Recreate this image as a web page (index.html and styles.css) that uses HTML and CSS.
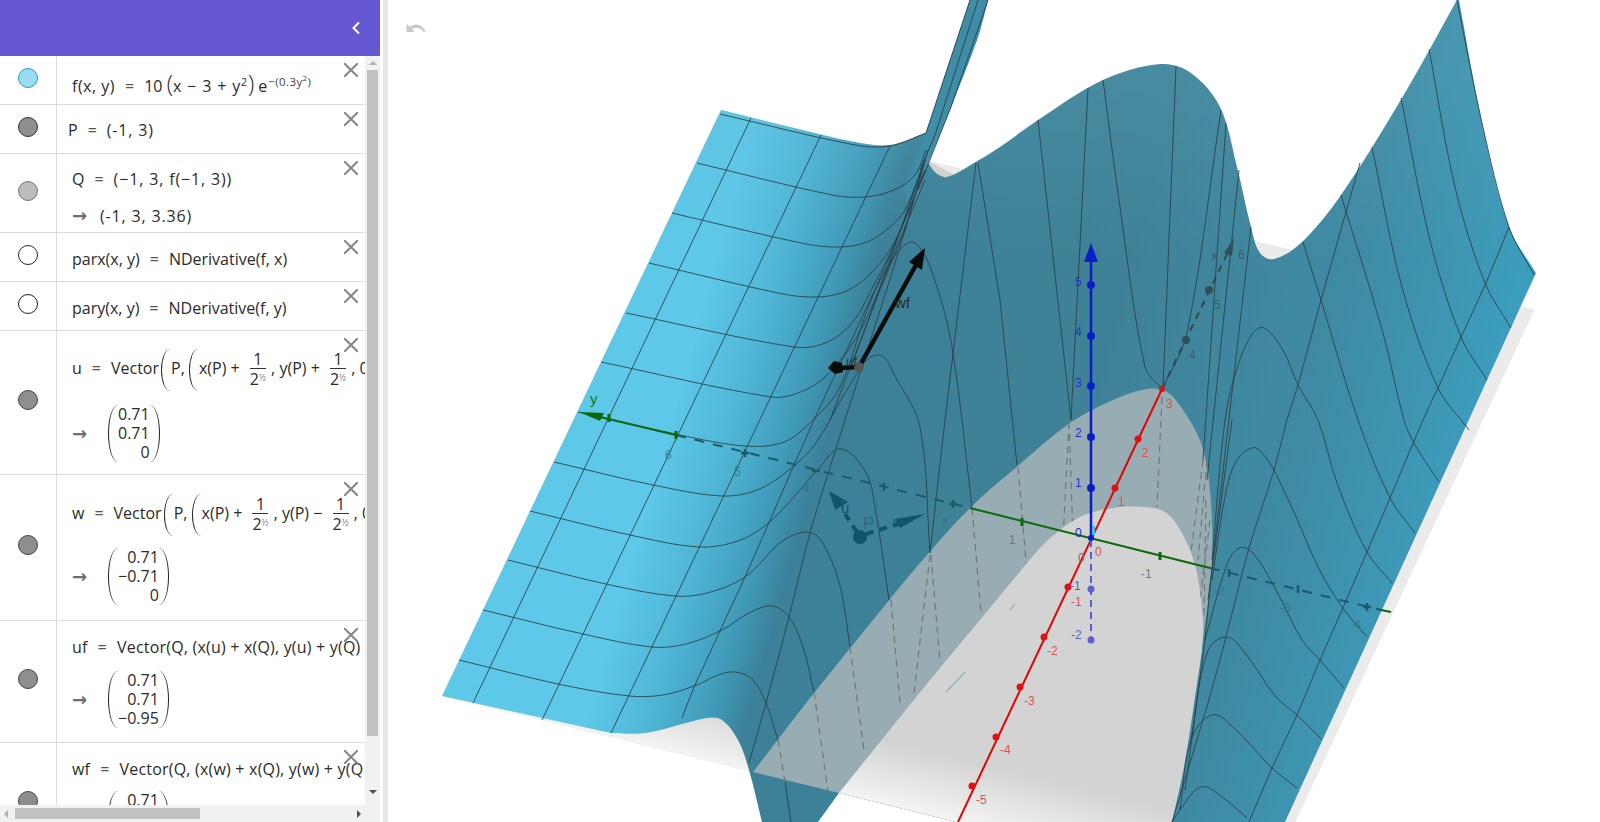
FILE: index.html
```html
<!DOCTYPE html>
<html lang="en">
<head>
<meta charset="utf-8">
<title>Graphing 3D</title>
<link rel="stylesheet" href="styles.css">
</head>
<body>
<div class="app">
  <aside class="panel">
    <header class="panel-head">
      <svg class="chevron" viewBox="0 0 10 14"><path d="M8 1.5 2.5 7 8 12.5"/></svg>
    </header>
    <div class="panel-body">
      <div class="list">
        <section class="row h2">
          <div class="marble-col"><span class="marble m-blue"></span></div>
          <div class="cell pt18">
            <div class="line"><span class="wide-s">f(x, y)</span><span class="op">=</span>10 <span class="lg">(</span><span class="wide">x − 3 + y<sup>2</sup></span><span class="lg">)</span> e<sup class="exp">−(0.3y<sup>2</sup>)</sup></div>
          </div>
          <svg class="close" viewBox="0 0 14 14"><path d="M0 0 14 14M14 0 0 14"/></svg>
        </section>
        <section class="row h2">
          <div class="marble-col"><span class="marble m-point"></span></div>
          <div class="cell pt13 nudge"><div class="line">P<span class="op">=</span><span class="wide">(-1, 3)</span></div></div>
          <svg class="close" viewBox="0 0 14 14"><path d="M0 0 14 14M14 0 0 14"/></svg>
        </section>
        <section class="row h3">
          <div class="marble-col"><span class="marble m-light"></span></div>
          <div class="cell pt13">
            <div class="line">Q<span class="op">=</span><span class="wide">(−1, 3, f(−1, 3))</span></div>
            <div class="result gap13"><span class="arrow narrow">→</span><span class="wide">(-1, 3, 3.36)</span></div>
          </div>
          <svg class="close" viewBox="0 0 14 14"><path d="M0 0 14 14M14 0 0 14"/></svg>
        </section>
        <section class="row h2">
          <div class="marble-col"><span class="marble m-open"></span></div>
          <div class="cell pt14"><div class="line">parx(x, y)<span class="op">=</span>NDerivative(f, x)</div></div>
          <svg class="close" viewBox="0 0 14 14"><path d="M0 0 14 14M14 0 0 14"/></svg>
        </section>
        <section class="row h2">
          <div class="marble-col"><span class="marble m-open"></span></div>
          <div class="cell pt14"><div class="line">pary(x, y)<span class="op">=</span>NDerivative(f, y)</div></div>
          <svg class="close" viewBox="0 0 14 14"><path d="M0 0 14 14M14 0 0 14"/></svg>
        </section>
        <section class="row h6">
          <div class="marble-col"><span class="marble m-grey"></span></div>
          <div class="cell pt15">
            <div class="line tall">u<span class="op">=</span>Vector<span class="bl"></span>P, <span class="bl b2"></span>x(P) + <span class="frac"><span class="num">1</span><span class="den">2<i>½</i></span></span> , y(P) + <span class="frac"><span class="num">1</span><span class="den">2<i>½</i></span></span> , 0</div>
            <div class="result gap15"><span class="arrow">→</span><div class="matrix"><span class="ml"></span><div class="cells"><span>0.71</span><span>0.71</span><span>0</span></div><span class="mr"></span></div></div>
          </div>
          <svg class="close" viewBox="0 0 14 14"><path d="M0 0 14 14M14 0 0 14"/></svg>
        </section>
        <section class="row h7">
          <div class="marble-col"><span class="marble m-grey"></span></div>
          <div class="cell pt16">
            <div class="line tall">w<span class="op">=</span>Vector<span class="bl"></span>P, <span class="bl b2"></span>x(P) + <span class="frac"><span class="num">1</span><span class="den">2<i>½</i></span></span> , y(P) − <span class="frac"><span class="num">1</span><span class="den">2<i>½</i></span></span> , 0</div>
            <div class="result gap13"><span class="arrow">→</span><div class="matrix"><span class="ml"></span><div class="cells"><span>0.71</span><span>−0.71</span><span>0</span></div><span class="mr"></span></div></div>
          </div>
          <svg class="close" viewBox="0 0 14 14"><path d="M0 0 14 14M14 0 0 14"/></svg>
        </section>
        <section class="row h8">
          <div class="marble-col"><span class="marble m-grey"></span></div>
          <div class="cell pt14">
            <div class="line long">uf<span class="op">=</span>Vector(Q, (x(u) + x(Q), y(u) + y(Q)</div>
            <div class="result gap12"><span class="arrow">→</span><div class="matrix"><span class="ml"></span><div class="cells"><span>0.71</span><span>0.71</span><span>−0.95</span></div><span class="mr"></span></div></div>
          </div>
          <svg class="close" viewBox="0 0 14 14"><path d="M0 0 14 14M14 0 0 14"/></svg>
        </section>
        <section class="row h8">
          <div class="marble-col"><span class="marble m-grey"></span></div>
          <div class="cell pt14">
            <div class="line long">wf<span class="op">=</span>Vector(Q, (x(w) + x(Q), y(w) + y(Q</div>
            <div class="result gap10"><span class="arrow">→</span><div class="matrix"><span class="ml"></span><div class="cells"><span>0.71</span><span>−0.71</span><span>2.5</span></div><span class="mr"></span></div></div>
          </div>
          <svg class="close" viewBox="0 0 14 14"><path d="M0 0 14 14M14 0 0 14"/></svg>
        </section>
      </div>
      <div class="vbar">
        <span class="tri tri-up"></span>
        <span class="vthumb"></span>
        <span class="tri tri-down"></span>
      </div>
    </div>
    <div class="hbar">
      <span class="tri tri-left"></span>
      <span class="hthumb"></span>
      <span class="tri tri-right"></span>
    </div>
  </aside>
  <div class="splitter"></div>
  <main class="stage">
    <svg class="undo" viewBox="0 0 22 11"><path d="M0 1v9h9L6 7c4-3 9-2 13 3l2-1C17 2 10-1 4 4z"/></svg>
    <svg class="scene" viewBox="388 0 1212 822" width="1212" height="822">
      <defs>
        <linearGradient id="planeGrad" gradientUnits="userSpaceOnUse" x1="700" y1="757" x2="714" y2="699">
          <stop offset="0" stop-color="#f2f2f2"/><stop offset="1" stop-color="#d3d3d3"/>
        </linearGradient>
        <linearGradient id="surfGrad" gradientUnits="userSpaceOnUse" x1="673" y1="189" x2="1500" y2="421">
          <stop offset=".07" stop-color="#5dc8e8"/>
          <stop offset=".14" stop-color="#50b6d6"/>
          <stop offset=".209" stop-color="#3f9ab8"/>
          <stop offset=".25" stop-color="#3c8199"/>
          <stop offset=".51" stop-color="#3f8197"/>
          <stop offset=".79" stop-color="#3f8ba4"/>
          <stop offset=".977" stop-color="#3c9dbc"/>
        </linearGradient>
        <linearGradient id="sheenGrad" gradientUnits="userSpaceOnUse" x1="0" y1="70" x2="0" y2="260">
          <stop offset="0" stop-color="#6fb4c8" stop-opacity=".2"/><stop offset="1" stop-color="#6fb4c8" stop-opacity="0"/>
        </linearGradient>
        <path id="surfShape" data-pts="721,110 790,127 855,142 890,145 926,133|926,133 970,0|988,0 978,37 951,107 928,163|928,163 936,173 947,177 974,163 1000,147 1038,120 1103,80 1161,64 1191,73 1220,107 1237,167 1251,227 1260,253 1274,259 1302,242 1341,195 1402,98 1457,0|1459,0 1482,123 1509,227 1536,273|1285,822|956,822|839,793|818,822|762,822 749,770 738,740 722,720 707,718 646,733 611,733|442,696" data-closed="1"></path>
      </defs>

      <path class="plane" d="M442 696 721 110 1534 310 1295 822H956z"/>
      <path class="plane-edge" d="M928 161 1534 310 1295 822H1200V300z"/>

      <use class="surface" href="#surfShape"/>
      <use class="sheen" href="#surfShape"/>
      <path class="spike" d="M926 133 970 0H988L978 37 951 107 928 163 912 215 903 190z"/>

      <path class="band" data-pts="753,772 810,698 873,620 920,563 970,508 1013,470 1070,423 1113,400 1147,389 1167,392 1183,410 1200,440 1208,473 1212,520 1212,567 1207,610 1203,637|1172,822|956,822|839,793" data-closed="1"></path>

      <g class="ghost">
        <path d="M972 508 981 613M1018 467 1027 573M930 555 914 693M931 555 940 662M891 600 900 703M850 647 864 750M814 692 828 792M778 740 785 782"/>
        <path d="M1069 422 1063 540M1069 422 1073 537M1162 397 1157 507M1207 460 1198 560M1203 460 1190 560M1210 520 1200 600M1206 500 1204 620"/>
      </g>

      <path class="inner" data-pts="839,793 880,742 930,680 980,620 1013,580 1047,541 1080,517 1113,508 1142,507 1165,512 1182,533 1195,565 1201,600 1203,637 1195,697 1184,767 1172,822|956,822" data-closed="1"></path>
      <path class="streak" d="M946 692 965 672M1010 610 1015 604"/>

      <g class="mesh">
        <path data-pts="720,114 855,145 890,146 926,133"></path>
        <path data-pts="697,163 832,195 865,197 894,190 915,175 926,150"></path>
        <path data-pts="672,213 806,244 840,247 867,242 890,227 905,210 925,160"></path>
        <path data-pts="649,263 783,294 817,297 844,292 867,277 894,243 925,170"></path>
        <path data-pts="626,313 794,347 825,343 852,323 875,283 894,245 925,170"></path>
        <path data-pts="601,362 771,397 798,393 825,377 859,333 894,253 925,180"></path>
        <path data-pts="578,412 680,435 745,446 784,442 813,420 840,387 871,300 897,253 915,243 937,287 953,353 972,507"></path>
        <path data-pts="554,462 653,485 722,496 757,490 789,470 816,443 850,385 877,355 897,380 920,427 930,553"></path>
        <path data-pts="530,511 630,535 699,547 738,541 766,525 793,498 820,467 841,449 866,473 875,507 889,600"></path>
        <path data-pts="508,560 606,584 674,596 707,593 745,577 784,540 812,533 828,553 841,590 850,647"></path>
        <path data-pts="483,610 583,634 652,647 686,644 722,630 749,613 772,606 789,617 803,647 814,692"></path>
        <path data-pts="459,660 558,684 629,696 663,695 697,685 718,675 736,672 753,680 766,703 778,740"></path>
        <path d="M751 118 473 703M821 135 542 720M890 146 611 733"/>
        <path data-pts="920,173 894,247 814,420 745,577 695,685 682,718"></path>
        <path data-pts="925,160 900,247 845,420 810,533 789,617 766,703 749,763"></path>
        <path d="M928 150 905 230 880 290 830 420M925 160 890 260 850 370M970 0 926 133M978 0 935 135 920 170M988 0 951 107 918 190M785 782 791 822"/>
        <path d="M978 163 1000 300 1017 465M976 163 945 420 930 553M1038 120 1071 420M1088 88 1071 420"/>
        <path data-pts="1103,80 1119,200 1145,367 1161,388"></path>
        <path d="M1176 66 1163 388"/>
        <path data-pts="1221,110 1187,333 1163,388"></path>
        <path d="M1226 123 1203 460M1239 170 1207 480M1251 227 1212 567"/>
        <path data-pts="1457,0 1482,123 1509,227 1534,275"></path>
        <path data-pts="1429,49 1455,187 1485,283 1511,328"></path>
        <path data-pts="1401,98 1430,240 1461,337 1487,380"></path>
        <path data-pts="1372,147 1402,287 1438,388 1469,430"></path>
        <path data-pts="1341,195 1383,333 1404,420 1415,445 1439,482"></path>
        <path data-pts="1303,242 1321,300 1358,420 1390,498 1415,533"></path>
        <path data-pts="1212,560 1225,420 1238,365 1253,333 1264,328 1283,350 1298,385 1318,420 1337,483 1367,552 1392,583"></path>
        <path data-pts="1212,580 1227,487 1240,456 1258,449 1287,497 1318,567 1342,607 1367,637"></path>
        <path data-pts="1205,640 1226,567 1239,548 1253,553 1276,590 1302,640 1320,660 1344,688"></path>
        <path data-pts="1191,740 1207,653 1226,637 1245,653 1276,697 1297,715 1321,739"></path>
        <path data-pts="1180,810 1191,740 1212,715 1233,727 1272,768 1297,788"></path>
        <path data-pts="1172,822 1180,810 1201,787 1222,797 1247,818"></path>
        <path data-pts="1509,227 1486,283 1461,337 1438,388 1423,420 1390,498 1367,552 1342,610 1320,660 1297,715 1272,768 1249,822"></path>
        <path data-pts="1360,163 1321,300 1298,385 1287,420 1274,470 1249,548 1226,637 1208,703 1172,822"></path>
        <path d="M1212 567 1205 640 1185 790M1208 600 1232 420"/>
      </g>

      <line class="axis-y-dash" x1="676" y1="435" x2="970" y2="508"/>
      <line class="axis-y-dash" x1="1210" y1="568" x2="1381" y2="610"/>
      <line class="axis-y" x1="600" y1="417" x2="676" y2="435"/>
      <line class="axis-y" x1="970" y1="508" x2="1210" y2="568"/>
      <line class="axis-y" x1="1381" y1="610" x2="1391" y2="612"/>
      <polygon class="head-y" points="579,412 604,413 600,421"/>
      <path class="tick-y" d="M609 414v8M676 431v8M1022 518v8M1160 552v8"/>
      <path class="tick-y-dim" d="M741 453h8M745 449v8M812 471h8M884 483v8M949 504h8M953 500v8M1229 569v8M1298 585v8M1363 607h8M1367 603v8"/>

      <line class="axis-x-dash" x1="1162" y1="389" x2="1228" y2="252"/>
      <polygon class="dim-dark" points="1234,238 1224,253 1232,256"/>
      <circle class="dim-dark" cx="1186" cy="340" r="4"/><circle class="dim-dark" cx="1209" cy="290" r="4"/>
      <line class="axis-x" x1="1162" y1="389" x2="958" y2="822"/>
      <g class="tick-x">
        <circle cx="1162" cy="389" r="3"/><circle cx="1138" cy="439" r="3.5"/><circle cx="1115" cy="488" r="3.5"/>
        <circle cx="1068" cy="587" r="3.5"/><circle cx="1044" cy="637" r="3.5"/><circle cx="1020" cy="687" r="3.5"/>
        <circle cx="996" cy="737" r="3.5"/><circle cx="972" cy="786" r="3.5"/>
      </g>

      <line class="axis-z-dash" x1="1091" y1="540" x2="1091" y2="648"/>
      <circle class="tick-z-dim" cx="1091" cy="589" r="3.5"/><circle class="tick-z-dim" cx="1091" cy="640" r="3.5"/>
      <line class="axis-z" x1="1091" y1="260" x2="1091" y2="538"/>
      <polygon class="head-z" points="1091,243 1098,262 1084,262"/>
      <g class="head-z">
        <circle cx="1091" cy="285" r="4"/><circle cx="1091" cy="336" r="4"/><circle cx="1091" cy="386" r="4"/>
        <circle cx="1091" cy="437" r="4"/><circle cx="1091" cy="488" r="4"/><circle cx="1091" cy="538" r="3"/>
      </g>
      <rect class="origin-mark" x="1092" y="526" width="3" height="9"/>

      <line class="vec-dash" x1="857" y1="532" x2="845" y2="514"/>
      <line class="vec-dash" x1="866" y1="534" x2="898" y2="524"/>
      <polygon class="vec-p" points="829,491 835,510 848,502"/>
      <polygon class="vec-p" points="925,514 895,519 900,528"/>
      <circle class="vec-p" cx="860" cy="537" r="7"/>
      <text class="lbl-vec" x="841" y="513">u</text>
      <text class="lbl-p" x="863" y="529">P</text>
      <text class="lbl-vec" x="893" y="527">w</text>

      <line class="vec-black" x1="859" y1="367" x2="916" y2="265"/>
      <polygon class="vec-tip" points="925,248 922,270 909,262"/>
      <line class="vec-black" x1="859" y1="367" x2="838" y2="368"/>
      <polygon class="vec-tip" points="828,368 834,361 842,363 843,372 835,374"/>
      <circle class="point-q" cx="859" cy="367" r="5"/>
      <text class="lbl-wf" x="895" y="308">wf</text>
      <text class="lbl-uf" x="846" y="366">uf</text>

      <text class="lbl-g" x="590" y="404">y</text>
      <g class="lbl-teal">
        <text x="665" y="459">6</text><text x="734" y="476">5</text><text x="803" y="492">4</text><text x="872" y="510">3</text><text x="941" y="527">2</text>
        <text x="1214" y="595">-2</text><text x="1280" y="612">-3</text><text x="1350" y="629">-4</text>
      </g>
      <g class="lbl-grey">
        <text x="1009" y="544">1</text><text x="1141" y="578">-1</text><text x="1078" y="562">0</text>
      </g>
      <g class="lbl-red">
        <text x="1166" y="408">3</text><text x="1142" y="457">2</text><text x="1118" y="506">1</text><text x="1095" y="556">0</text>
        <text x="1071" y="606">-1</text><text x="1047" y="655">-2</text><text x="1024" y="705">-3</text><text x="1000" y="754">-4</text><text x="976" y="804">-5</text>
      </g>
      <g class="lbl-blue">
        <text x="1075" y="286">5</text><text x="1075" y="336">4</text><text x="1075" y="387">3</text><text x="1075" y="437">2</text><text x="1075" y="487">1</text><text x="1075" y="537">0</text>
      </g>
      <g class="lbl-violet">
        <text x="1070" y="590">-1</text><text x="1071" y="639">-2</text>
      </g>
      <g class="lbl-dim">
        <text class="lbl-x" x="1211" y="261">x</text><text x="1238" y="259">6</text><text x="1214" y="309">5</text><text x="1189" y="359">4</text>
      </g>
    </svg>
  </main>
</div>
<script src="scene.js"></script>
</body>
</html>
```

FILE: styles.css
```css
* { box-sizing: border-box; }
html, body { margin: 0; height: 100%; background: #fff; overflow: hidden; }
.app { display: flex; width: 1600px; height: 822px; }

.panel { width: 380px; height: 822px; display: flex; flex-direction: column; flex: none; font-family: "Open Sans", "Noto Sans", sans-serif; font-size: 16px; color: #2b2b2b; }
.panel-head { height: 56px; background: #6557d2; display: flex; align-items: center; justify-content: flex-end; padding-right: 19px; flex: none; }
.chevron { width: 10px; height: 14px; fill: none; stroke: #fff; stroke-width: 2; }
.panel-body { flex: 1; display: flex; min-height: 0; }
.list { flex: 1; overflow: hidden; min-width: 0; }

.row { position: relative; display: flex; border-bottom: 1px solid #dcdcdc; overflow: hidden; }
.h2 { height: 49px; }
.h3 { height: 79px; }
.h6 { height: 144px; }
.h7 { height: 146px; }
.h8 { height: 122px; }

.marble-col { width: 57px; flex: none; border-right: 1px solid #dcdcdc; display: flex; align-items: center; justify-content: center; padding-bottom: 5px; }
.marble { width: 20px; height: 20px; border-radius: 50%; border: 1px solid #444; display: block; }
.m-blue { background: #9adcf0; border-color: #2b9ac0; }
.m-point { background: #938e8e; border-color: #333; }
.m-light { background: #bcbcbc; border-color: #777; }
.m-open { background: #fff; border-color: #222; }
.m-grey { background: #8e8e8e; border-color: #444; }

.cell { padding-left: 15px; flex: none; }
.nudge { padding-left: 11px; }
.pt13 { padding-top: 13px; }
.pt14 { padding-top: 14px; }
.pt15 { padding-top: 15px; }
.pt16 { padding-top: 16px; }
.pt18 { padding-top: 18px; }

.line { height: 24px; line-height: 24px; white-space: nowrap; }
.tall { height: 44px; line-height: 44px; }
.long { letter-spacing: .2px; }
.wide { letter-spacing: .85px; }
.wide-s { letter-spacing: .5px; }
.op { margin: 0 10px; color: #555; }
.lg { font-size: 23px; font-weight: 300; line-height: 0; }
sup { font-size: 10.5px; line-height: 0; }
.exp { font-size: 11.5px; letter-spacing: .4px; color: #444; margin-left: 1px; }
.exp sup { font-size: 8px; }

.bl { display: inline-block; width: 9px; height: 42px; margin: 0 1px 0 2px; vertical-align: middle; border-left: 1.5px solid #222; border-radius: 100% 0 0 100% / 50%; }
.b2 { margin-left: 0; }

.frac { display: inline-flex; flex-direction: column; align-items: center; vertical-align: middle; line-height: 17px; margin: 0 1px 0 6px; }
.num { border-bottom: 1px solid #333; padding: 0 1px; width: 16px; text-align: center; }
.den { line-height: 20px; white-space: nowrap; }
.den i { font-style: normal; font-size: 9px; color: #777; vertical-align: 4px; line-height: 0; }

.result { display: flex; align-items: center; white-space: nowrap; }
.gap10 { margin-top: 10px; }
.gap12 { margin-top: 12px; }
.gap13 { margin-top: 13px; }
.gap15 { margin-top: 15px; }
.arrow { width: 16px; margin-right: 20px; color: #6e6e6e; font-family: "DejaVu Sans", sans-serif; font-size: 18px; font-weight: 700; line-height: 24px; }
.narrow { margin-right: 12px; }
.matrix { display: flex; align-items: stretch; }
.ml, .mr { width: 10px; border-radius: 100% 0 0 100% / 50%; border-left: 1.5px solid #222; }
.mr { border-left: 0; border-right: 1.5px solid #222; border-radius: 0 100% 100% 0 / 50%; }
.cells { display: flex; flex-direction: column; text-align: right; line-height: 19px; }

.close { position: absolute; top: 7px; right: 7px; width: 14px; height: 14px; fill: none; stroke: #858585; stroke-width: 2; }

.vbar { width: 15px; flex: none; background: #f1f1f1; display: flex; flex-direction: column; align-items: center; padding-top: 5px; }
.vthumb { width: 11px; height: 666px; background: #c1c1c1; margin-top: 5px; }
.hbar { height: 17px; flex: none; background: #f1f1f1; display: flex; align-items: center; padding: 0 19px 0 4px; }
.hthumb { width: 185px; height: 11px; background: #c1c1c1; margin-left: 7px; margin-right: auto; }
.tri { width: 0; height: 0; display: block; border: 0 solid transparent; }
.tri-up { border-width: 0 4px 4px; border-bottom-color: #b0b0b0; }
.tri-down { border-width: 4px 4px 0; border-top-color: #505050; margin-top: 54px; }
.tri-left { border-width: 4px 4px 4px 0; border-right-color: #b0b0b0; }
.tri-right { border-width: 4px 0 4px 4px; border-left-color: #505050; }

.splitter { width: 8px; flex: none; background: linear-gradient(90deg, #fff 3px, #e6e6e6 3px); }
.stage { position: relative; flex: 1; overflow: hidden; }
.scene { display: block; }
.undo { position: absolute; left: 18px; top: 23px; width: 21px; height: 10px; fill: #c8c8c8; }

.plane { fill: url(#planeGrad); }
.plane-edge { fill: #ebebeb; }
.surface { fill: url(#surfGrad); }
.sheen { fill: url(#sheenGrad); }
.spike { fill: #3f8da7; }
.band { fill: #98acb3; }
.inner { fill: url(#planeGrad); }
.streak { fill: none; stroke: #8fb2bd; stroke-width: 1.2; }

.mesh path { fill: none; stroke: #2c3e43; stroke-width: 1; stroke-opacity: .85; }
.ghost path { fill: none; stroke: #70787a; stroke-width: 1.2; stroke-dasharray: 7 5; }

.axis-y { stroke: #0b690b; stroke-width: 2; }
.axis-y-dash { stroke: #1d5a6c; stroke-width: 2; stroke-dasharray: 10 9; }
.head-y { fill: #0b690b; }
.tick-y { fill: none; stroke: #0b690b; stroke-width: 3; }
.tick-y-dim { fill: none; stroke: #1d5a6c; stroke-width: 2.5; }
.axis-x { stroke: #e00505; stroke-width: 2; }
.axis-x-dash { stroke: #33484e; stroke-width: 2; stroke-dasharray: 7 6; }
.tick-x { fill: #dd1111; }
.dim-dark { fill: #33505a; }
.axis-z { stroke: #0a1ec8; stroke-width: 2.5; }
.axis-z-dash { stroke: #5a5fd0; stroke-width: 2; stroke-dasharray: 7 5; }
.head-z { fill: #0a1ec8; }
.tick-z-dim { fill: #5f5fd0; }
.origin-mark { fill: #4dbcd8; }

.vec-dash { stroke: #0f566a; stroke-width: 4; stroke-dasharray: 8 6; }
.vec-p { fill: #0f566a; }
.vec-black { stroke: #0b0b0b; stroke-width: 4.5; }
.vec-tip { fill: #0b0b0b; }
.point-q { fill: #555; }

.scene text { font-family: "Liberation Sans", sans-serif; font-size: 12px; }
.scene .lbl-vec { font-size: 15px; fill: #0f566a; }
.scene .lbl-p { font-size: 17px; fill: #266a80; }
.scene .lbl-wf { font-size: 15px; fill: #262626; }
.scene .lbl-uf { font-size: 13px; fill: #333; }
.scene .lbl-g { font-size: 15px; fill: #0f7a0f; }
.scene .lbl-x { font-size: 14px; }
.lbl-teal { fill: #2f6f85; fill-opacity: .8; }
.lbl-grey { fill: #6a7b76; }
.lbl-red { fill: #e05050; }
.lbl-blue { fill: #2430d8; }
.lbl-violet { fill: #5a5fd0; }
.lbl-dim { fill: #35606e; }
```

FILE: scene.js
```js
// Turns the sampled curve data on [data-pts] paths into smooth SVG paths.
// Runs separated by "|" are joined with straight edges, which keeps corners sharp.
function unit(a, b) {
  var dx = b[0] - a[0], dy = b[1] - a[1], len = Math.hypot(dx, dy) || 1;
  return [dx / len, dy / len];
}
function smoothRun(p, start) {
  var d = (start ? 'M' : 'L') + p[0];
  for (var i = 0; i < p.length - 1; i++) {
    var a = p[Math.max(i - 1, 0)], b = p[i], c = p[i + 1], e = p[Math.min(i + 2, p.length - 1)];
    var len = Math.hypot(c[0] - b[0], c[1] - b[1]) / 3;
    var t1 = unit(a, c), t2 = unit(b, e);
    d += 'C' + (b[0] + t1[0] * len) + ' ' + (b[1] + t1[1] * len) + ' ' +
         (c[0] - t2[0] * len) + ' ' + (c[1] - t2[1] * len) + ' ' + c[0] + ' ' + c[1];
  }
  return d;
}
document.querySelectorAll('[data-pts]').forEach(function (el) {
  var runs = el.getAttribute('data-pts').split('|').map(function (run) {
    return run.trim().split(/\s+/).map(function (xy) { return xy.split(',').map(Number); });
  });
  var d = runs.map(function (run, i) { return smoothRun(run, i === 0); }).join('');
  el.setAttribute('d', d + (el.hasAttribute('data-closed') ? 'Z' : ''));
});
```
